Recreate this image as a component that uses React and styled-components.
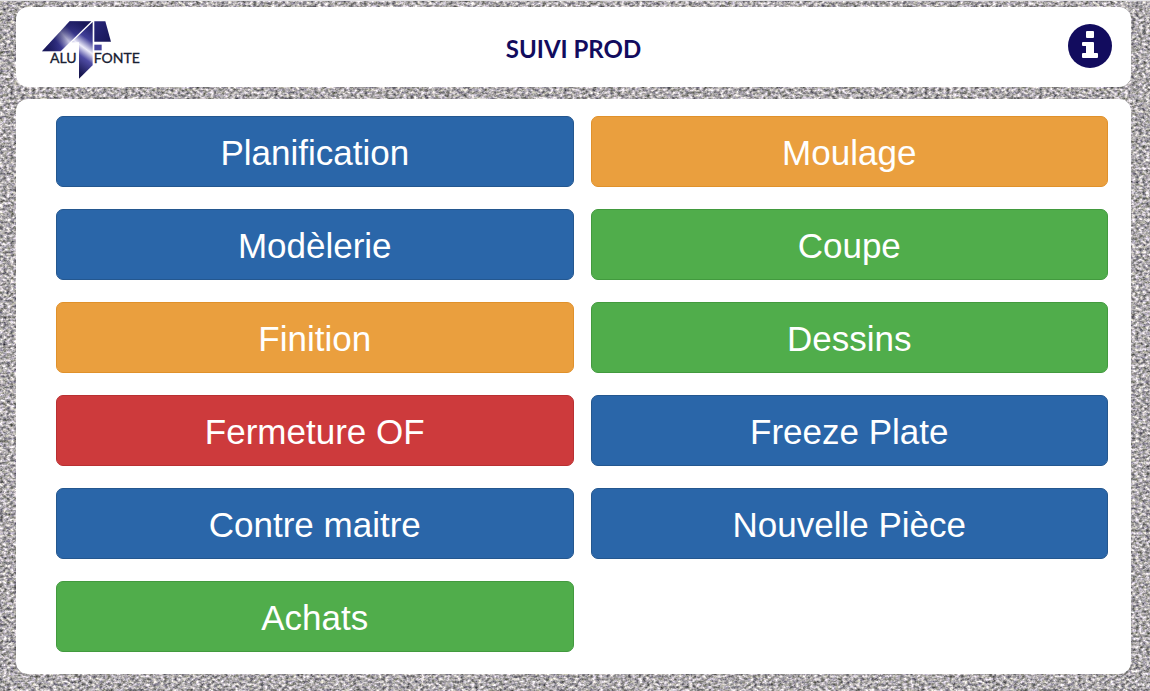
import React from "react";
import styled, { createGlobalStyle } from "styled-components";

const GlobalStyle = createGlobalStyle`
  *, *::before, *::after { box-sizing: border-box; }
  body {
    margin: 0;
    background: #aaa6ac;
    font-family: "Liberation Sans", Arial, sans-serif;
  }
`;

const Backdrop = styled.svg`
  position: fixed;
  inset: 0;
  width: 100%;
  height: 100%;
  z-index: -1;
`;

const Page = styled.div`
  display: flex;
  flex-direction: column;
  gap: 12px;
  min-height: 100vh;
  padding: 6px 19px 17px 16px;
  border-top: 1px solid #e4e3e6;
`;

const Header = styled.header`
  display: grid;
  grid-template-columns: 1fr auto 1fr;
  align-items: center;
  height: 80px;
  padding: 0 19px;
  background: #fff;
  border-radius: 12px;
`;

const Title = styled.h1`
  margin: 0;
  padding-top: 4px;
  color: #120c5e;
  font: 700 24px/32px Lato, sans-serif;
`;

const InfoButton = styled.button`
  justify-self: end;
  width: 44px;
  height: 44px;
  margin-bottom: 2px;
  padding: 0;
  border: 0;
  border-radius: 50%;
  background: none;
  cursor: pointer;

  svg { display: block; }
`;

const LogoImage = styled.svg`
  display: block;
  width: 104px;
  height: 62px;
  margin: 4px 0 0 5px;
`;

const Menu = styled.main`
  display: grid;
  grid-template-columns: 1fr 1fr;
  align-content: start;
  gap: 22px 17px;
  padding: 17px 23px 22px 40px;
  background: #fff;
  border-radius: 12px;
`;

const tones = {
  blue: ["#2a66a9", "#24578f"],
  orange: ["#ea9f3e", "#e0912b"],
  green: ["#50ad4b", "#429a3e"],
  red: ["#cd3a3c", "#b93032"],
};

const MenuButton = styled.button`
  height: 71px;
  padding: 2px 16px 0;
  border: 1px solid ${({ $tone }) => tones[$tone][1]};
  border-radius: 7px;
  background: ${({ $tone }) => tones[$tone][0]};
  color: #fff;
  font: 400 35px/48px "Liberation Sans", Arial, sans-serif;
  cursor: pointer;
`;

const entries = [
  ["Planification", "blue"],
  ["Moulage", "orange"],
  ["Modèlerie", "blue"],
  ["Coupe", "green"],
  ["Finition", "orange"],
  ["Dessins", "green"],
  ["Fermeture OF", "red"],
  ["Freeze Plate", "blue"],
  ["Contre maitre", "blue"],
  ["Nouvelle Pièce", "blue"],
  ["Achats", "green"],
];

function StoneTexture() {
  return (
    <Backdrop aria-hidden="true">
      <filter id="stone" x="0" y="0" width="100%" height="100%" colorInterpolationFilters="sRGB">
        <feTurbulence type="fractalNoise" baseFrequency="0.28 0.37" numOctaves="3" seed="8" />
        <feColorMatrix
          values="1.15 0.1 0 0 0.055
                  1.1 0.15 0 0 0.04
                  1.1 0 0.15 0 0.05
                  0 0 0 0 1"
        />
      </filter>
      <rect width="100%" height="100%" filter="url(#stone)" />
    </Backdrop>
  );
}

function Logo() {
  return (
    <LogoImage viewBox="30 24 312 186" role="img" aria-label="Alu Fonte">
      <defs>
        <linearGradient id="wing" gradientUnits="userSpaceOnUse" x1="58" y1="128" x2="160" y2="42">
          <stop offset="0" stopColor="#19185a" />
          <stop offset="0.28" stopColor="#3c3a94" />
          <stop offset="0.5" stopColor="#dddcf2" />
          <stop offset="0.7" stopColor="#413f98" />
          <stop offset="1" stopColor="#19185a" />
        </linearGradient>
        <linearGradient id="wingShade" gradientUnits="userSpaceOnUse" x1="84" y1="38" x2="128" y2="96">
          <stop offset="0" stopColor="#19185a" />
          <stop offset="1" stopColor="#19185a" stopOpacity="0" />
        </linearGradient>
        <linearGradient id="blade" gradientUnits="userSpaceOnUse" x1="200" y1="54" x2="118" y2="168">
          <stop offset="0" stopColor="#1b1a63" />
          <stop offset="0.3" stopColor="#413f98" />
          <stop offset="0.5" stopColor="#eeedfa" />
          <stop offset="0.68" stopColor="#4f4ca4" />
          <stop offset="1" stopColor="#17164f" />
        </linearGradient>
        <linearGradient id="side" x1="0" y1="0" x2="1" y2="1">
          <stop offset="0" stopColor="#29277b" />
          <stop offset="1" stopColor="#171656" />
        </linearGradient>
      </defs>
      <path d="M119 34H184L92 124H36Z" fill="url(#wing)" />
      <path d="M119 34H184L92 124H36Z" fill="url(#wingShade)" />
      <path d="M188 36V166L147 206V97H125Z" fill="url(#blade)" />
      <path d="M193 34H226L243 95H193Z" fill="url(#side)" />
      <path d="M193 104H215V121H193Z" fill="#4745a0" />
      <g fill="#172033" stroke="#172033" strokeWidth="1" fontFamily="Lato, sans-serif" fontSize="42">
        <text x="60" y="158">ALU</text>
        <text x="191" y="158">FONTE</text>
      </g>
    </LogoImage>
  );
}

function InfoIcon() {
  return (
    <svg width="44" height="44" viewBox="0 0 44 44" aria-hidden="true">
      <circle cx="22" cy="22" r="22" fill="#120c5e" />
      <rect x="18" y="7" width="8" height="7" rx="1" fill="#fff" />
      <path
        d="M15 18H25Q26 18 26 19V29H29Q30 29 30 30V33Q30 34 29 34H15Q14 34 14 33V30Q14 29 15 29H18V22H15Q14 22 14 21V19Q14 18 15 18Z"
        fill="#fff"
      />
    </svg>
  );
}

export default function App() {
  return (
    <>
      <GlobalStyle />
      <StoneTexture />
      <Page>
        <Header>
          <Logo />
          <Title>SUIVI PROD</Title>
          <InfoButton type="button" aria-label="Informations">
            <InfoIcon />
          </InfoButton>
        </Header>
        <Menu>
          {entries.map(([label, tone]) => (
            <MenuButton key={label} type="button" $tone={tone}>
              {label}
            </MenuButton>
          ))}
        </Menu>
      </Page>
    </>
  );
}
